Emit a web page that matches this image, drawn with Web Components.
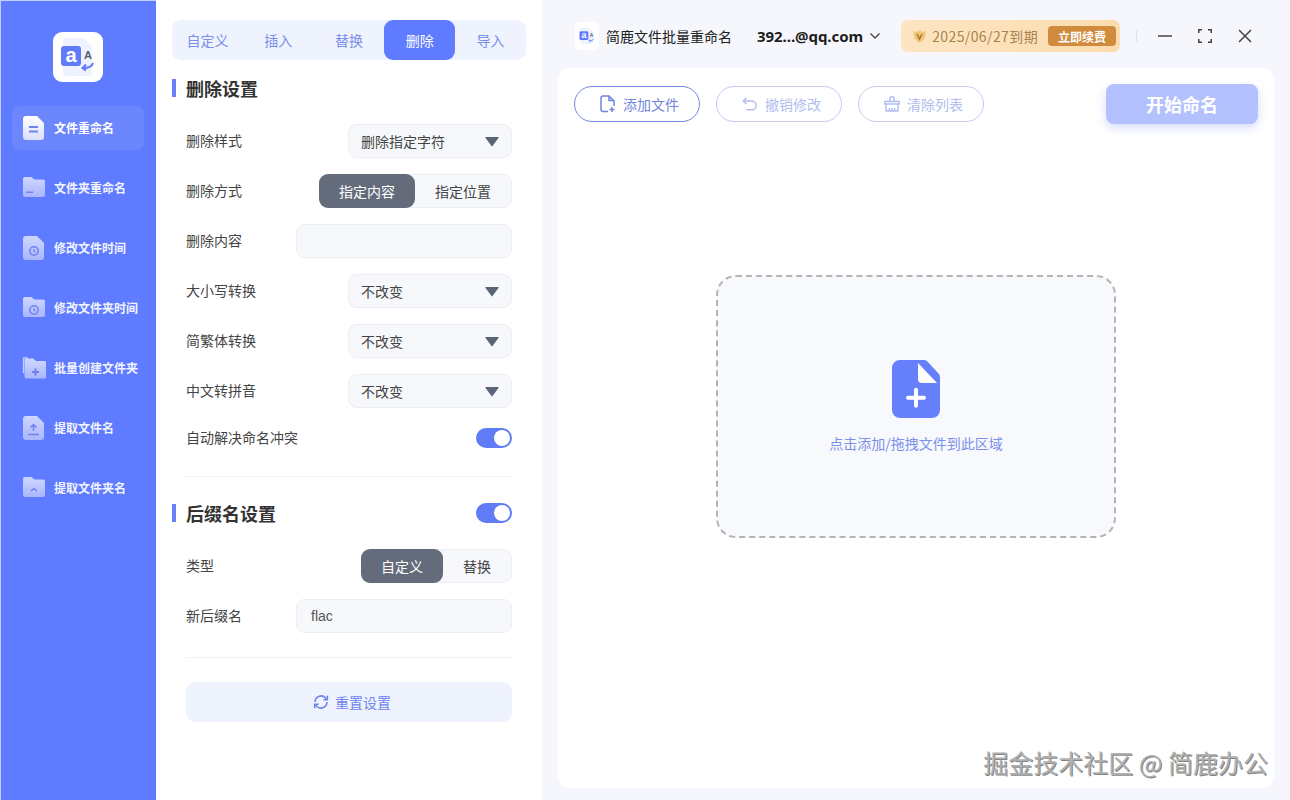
<!DOCTYPE html>
<html lang="zh"><head><meta charset="utf-8"><title>简鹿文件批量重命名</title>
<style>
html,body{margin:0;padding:0;height:100%}
body{width:1290px;height:800px;overflow:hidden;position:relative;display:flex;font-family:"Noto Sans CJK SC","Noto Sans",sans-serif;color:#333;font-size:14px}
</style></head><body>
<x-sidebar></x-sidebar>
<x-panel></x-panel>
<x-main></x-main>
<x-watermark>掘金技术社区 @ 简鹿办公</x-watermark>
<script>
const def=(name,css,html,extra)=>{customElements.define(name,class extends HTMLElement{
  connectedCallback(){ if(this.shadowRoot)return; const s=this.attachShadow({mode:'open'});
    s.innerHTML=`<style>${css}</style>`+(typeof html==='function'?html(this):html); if(extra)extra(this,s);} });};

const logoSvg=(w,h)=>`<svg width="${w}" height="${h}" viewBox="0 0 50 50"><path d="M14 6h16l9 9v25a4 4 0 0 1-4 4H14a4 4 0 0 1-4-4V10a4 4 0 0 1 4-4z" fill="#eef1fe"/><rect x="8" y="14" width="20" height="20" rx="3" fill="#5f7bfb"/><text x="18" y="30" text-anchor="middle" font-family="Liberation Sans,sans-serif" font-weight="700" font-size="20" fill="#fff">a</text><text x="35" y="27" text-anchor="middle" font-family="Liberation Sans,sans-serif" font-weight="700" font-size="11" fill="#555c70">A</text><path d="M40 31c-1 4-5 5-10 5m3-3.500-3.500 3.500 3.500 2.500" fill="none" stroke="#5f7bfb" stroke-width="2"/></svg>`;

const DOC="M3 0h11l7 7v14a3 3 0 0 1-3 3H3a3 3 0 0 1-3-3V3a3 3 0 0 1 3-3z";
const FOLD="M2 1h6.500l3 2.500H20a2 2 0 0 1 2 2V19a2 2 0 0 1-2 2H2a2 2 0 0 1-2-2V3a2 2 0 0 1 2-2z";
const clock=(x,y)=>`<circle cx="${x}" cy="${y}" r="4.200" fill="none" stroke="#6f82e8" stroke-width="1.500"/><path d="M${x} ${y-2}v2.200l1.600 1" fill="none" stroke="#6f82e8" stroke-width="1.200"/>`;
const ICONS={
 doc:{p:DOC,o:`<rect x="6" y="10" width="9" height="2" fill="#6f82ee"/><rect x="6" y="14.500" width="9" height="2" fill="#6f82ee"/>`,a:1},
 folder:{p:FOLD,o:`<rect x="3" y="15.500" width="7" height="1.500" fill="#6f82e8"/>`},
 doctime:{p:DOC,o:clock(11,15)},
 foldtime:{p:FOLD,o:clock(11,14)},
 foldadd:{p:FOLD,pre:`<path d="M5 3H0.500v15" transform="translate(0 -1)" fill="none" stroke="#c4cdfd" stroke-width="1.300"/>`,o:`<path d="M11 11v7M7.500 14.500h7" stroke="#6f82e8" stroke-width="2"/>`,shift:1},
 docup:{p:DOC,o:`<path d="M10.500 15V9M7.500 11.500l3-3 3 3M5 18.500h11" fill="none" stroke="#6f82e8" stroke-width="1.500"/>`},
 foldup:{p:FOLD,o:`<path d="M8 15l3-2.500 3 2.500" fill="none" stroke="#6f82e8" stroke-width="1.500"/>`},
};
let gid=0;
const navIcon=(k)=>{const i=ICONS[k],id='g'+(++gid);
 return `<svg width="24" height="24" viewBox="-1 0 24 24"><defs><linearGradient id="${id}" x1="0" y1="0" x2="0" y2="1"><stop offset="0" stop-color="${i.a?'#fff':'#cfd7ff'}"/><stop offset="1" stop-color="${i.a?'#d9dffe':'#a9b6fc'}"/></linearGradient></defs>${i.pre||''}<g ${i.shift?'transform="translate(1.500 1.500)"':''}><path d="${i.p}" fill="url(#${id})"/>${i.o}</g></svg>`;};

def('x-nav-item',`:host{display:flex;align-items:center;height:44px;padding-left:10px;gap:8px;border-radius:8px;color:#f2f4ff;font-size:12px;font-weight:700;white-space:nowrap}
:host([active]){background:#6c86fd;color:#fff}svg{flex:none}span{margin-top:-2px}`,
 h=>navIcon(h.getAttribute('icon'))+`<span><slot></slot></span>`);

def('x-sidebar',`:host{display:flex;flex-direction:column;align-items:stretch;width:156px;flex:none;height:800px;box-sizing:border-box;background:#5f7bff;padding:32px 12px 0;gap:16px;box-shadow:inset 1px 1px 0 #c3ceff}
.logo{width:50px;height:50px;border-radius:9px;background:#fff;align-self:center;margin-bottom:8px;display:block}.logo svg{display:block}`,
 `<div class="logo">${logoSvg(50,50)}</div>
 <x-nav-item icon="doc" active>文件重命名</x-nav-item>
 <x-nav-item icon="folder">文件夹重命名</x-nav-item>
 <x-nav-item icon="doctime">修改文件时间</x-nav-item>
 <x-nav-item icon="foldtime">修改文件夹时间</x-nav-item>
 <x-nav-item icon="foldadd">批量创建文件夹</x-nav-item>
 <x-nav-item icon="docup">提取文件名</x-nav-item>
 <x-nav-item icon="foldup">提取文件夹名</x-nav-item>`);

def('x-tabs',`:host{display:grid;grid-template-columns:repeat(5,1fr);height:40px;background:#eef3fe;border-radius:9px;width:354px;margin-left:-14px;color:#7b8eea;font-size:14px}
div{display:flex;align-items:center;justify-content:center;border-radius:9px}.on{background:#5f7bff;color:#fff}`,
 `<div>自定义</div><div>插入</div><div>替换</div><div class="on">删除</div><div>导入</div>`);

def('x-heading',`:host{display:flex;align-items:center;justify-content:space-between;position:relative;font-size:18px;font-weight:700;color:#333;height:18px;line-height:18px}
:host::before{content:"";position:absolute;left:-14px;top:0;bottom:0;width:4px;background:#6a80fb}`,`<slot></slot><slot name="end"></slot>`);

def('x-row',`:host{display:flex;align-items:center;justify-content:space-between;height:34px;color:#444;font-size:14px;white-space:nowrap}`,`<slot name="label"></slot><slot></slot>`);

const fieldCss=`box-sizing:border-box;height:34px;background:#f6f8fc;border:1px solid #eceef4;border-radius:9px;`;
def('x-select',`:host{display:flex;align-items:center;justify-content:space-between;${fieldCss}width:164px;padding:0 12px;font-size:14px;color:#444}
svg{display:block}`,`<slot></slot><svg width="14" height="11" viewBox="0 0 14 11"><path d="M1 1h12a.6.6 0 0 1 .5 1L7.500 10a.6.6 0 0 1-1 0L.500 2A.6.6 0 0 1 1 1z" fill="#5c6478"/></svg>`);

def('x-input',`:host{display:flex;align-items:center;${fieldCss}width:216px;padding:0 14px;font:14px "Liberation Sans",sans-serif;color:#555}`,`<slot></slot>`);

def('x-segment',`:host{display:flex;${fieldCss}font-size:14px;color:#444}
div{display:flex;align-items:center;justify-content:center;margin:-1px 0 -1px 0}.on{background:#646c7c;color:#fff;border-radius:9px;margin-left:-1px}`,
 h=>{const [a,b]=h.getAttribute('items').split(',');const [wa,wb]=h.getAttribute('widths').split(',');return `<div class="on" style="width:${wa}px">${a}</div><div style="width:${wb}px">${b}</div>`});

def('x-toggle',`:host{display:block;width:36px;height:20px;border-radius:10px;background:#5f7bf5;position:relative}
:host::after{content:"";position:absolute;right:2px;top:2px;width:16px;height:16px;border-radius:50%;background:#fff}`,``);

def('x-divider',`:host{display:block;height:1px;background:#f0f1f5}`,``);

def('x-reset',`:host{display:flex;align-items:center;justify-content:center;gap:6px;height:40px;box-sizing:border-box;padding-left:6px;background:#eef3fe;border-radius:9px;color:#6f84ee;font-size:14px}svg{display:block}`,
 `<svg width="16" height="16" viewBox="0 0 16 16" fill="none" stroke="#6f84ee" stroke-width="1.600"><path d="M2 8a6 6 0 0 1 10.300-4.200L14 5.500M14 8a6 6 0 0 1-10.300 4.200L2 10.500"/><path d="M14.300 1.800v3.900h-3.900M1.700 14.200v-3.900h3.900"/></svg><slot></slot>`);

def('x-panel',`:host{display:flex;flex-direction:column;width:386px;flex:none;box-sizing:border-box;background:#fff;height:800px;padding:20px 30px 0}
x-heading.a{margin-top:19px}x-row.f{margin-top:27px}x-row.n{margin-top:16px}
.tog{display:flex;align-items:center;justify-content:space-between;height:20px;margin-top:20px;color:#444}
.d1{margin-top:28px}.h2{margin-top:27px;height:18px}.d2{margin-top:24px}x-reset{margin-top:24px}
span{line-height:20px;padding-bottom:2px}`,
 `<x-tabs></x-tabs>
 <x-heading class="a">删除设置</x-heading>
 <x-row class="f"><span slot="label">删除样式</span><x-select>删除指定字符</x-select></x-row>
 <x-row class="n"><span slot="label">删除方式</span><x-segment items="指定内容,指定位置" widths="96,96"></x-segment></x-row>
 <x-row class="n"><span slot="label">删除内容</span><x-input></x-input></x-row>
 <x-row class="n"><span slot="label">大小写转换</span><x-select>不改变</x-select></x-row>
 <x-row class="n"><span slot="label">简繁体转换</span><x-select>不改变</x-select></x-row>
 <x-row class="n"><span slot="label">中文转拼音</span><x-select>不改变</x-select></x-row>
 <div class="tog"><span>自动解决命名冲突</span><x-toggle></x-toggle></div>
 <x-divider class="d1"></x-divider>
 <x-heading class="h2">后缀名设置<x-toggle slot="end"></x-toggle></x-heading>
 <x-row class="f"><span slot="label">类型</span><x-segment items="自定义,替换" widths="82,68"></x-segment></x-row>
 <x-row class="n"><span slot="label">新后缀名</span><x-input>flac</x-input></x-row>
 <x-divider class="d2"></x-divider>
 <x-reset>重置设置</x-reset>`);

def('x-titlebar',`:host{display:flex;align-items:center;height:68px;box-sizing:border-box;padding:4px 0 0 33px;color:#222;white-space:nowrap}
.ic{width:24px;height:28px;background:#fff;border-radius:4px;display:flex;align-items:center;justify-content:center;flex:none}
.t{margin-left:7px;font-size:14px}.m{margin-left:25px;font:700 15px "Noto Sans","Liberation Sans",sans-serif;letter-spacing:-.05px;color:#1d1d1d}
.ch{margin-left:6px;display:block}
.vip{margin-left:20px;width:219px;height:32px;box-sizing:border-box;border-radius:7px;background:linear-gradient(90deg,#fde5c3,#fcdcae);display:flex;align-items:center;padding:0 4px 0 11px;color:#a98350;font-size:14px;letter-spacing:.4px}
.vip svg{margin-right:5px;flex:none}
.r{margin-left:auto;width:68px;height:20px;background:#d08c3c;border-radius:4px;color:#fff;font-size:12px;font-weight:700;letter-spacing:0;display:flex;align-items:center;justify-content:center;flex:none}
.sep{width:1px;height:12px;background:#dfe2ea;margin:0 0 0 16px}
.b{display:block;margin-top:-1px}`,
 `<div class="ic">${logoSvg(22,22)}</div><div class="t">简鹿文件批量重命名</div><div class="m">392...@qq.com</div>
 <svg class="ch" width="12" height="8" viewBox="0 0 12 8"><path d="M1.500 1.500 6 6l4.500-4.500" fill="none" stroke="#444" stroke-width="1.300"/></svg>
 <div class="vip"><svg width="15" height="15" viewBox="0 0 15 15"><path d="M1 2l3 1 3.500-1.500L11 3l3-1-1.500 8-5 4-5-4z" fill="#f1c777"/><path d="M5 5l2.500 5L10 5" fill="none" stroke="#a4762c" stroke-width="1.500"/></svg>2025/06/27到期<div class="r">立即续费</div></div>
 <div class="sep"></div>
 <svg class="b" style="margin-left:21px" width="14" height="14" viewBox="0 0 14 14"><path d="M0 7h14" stroke="#444" stroke-width="1.500"/></svg>
 <svg class="b" style="margin-left:26px" width="14" height="14" viewBox="0 0 14 14" fill="none" stroke="#444" stroke-width="1.500"><path d="M.800 4V.800H4M10 .800h3.200V4M13.200 10v3.200H10M4 13.200H.800V10"/></svg>
 <svg class="b" style="margin-left:26px" width="14" height="14" viewBox="0 0 14 14"><path d="M1 1l12 12M13 1 1 13" stroke="#444" stroke-width="1.500"/></svg>`);

def('x-btn',`:host{display:flex;align-items:center;justify-content:center;gap:7px;width:126px;height:36px;box-sizing:border-box;padding-left:5px;border-radius:18px;border:1px solid #c3cbf2;color:#b2bdf0;font-size:14px;background:#fff}
:host([on]){border-color:#7186df;color:#6f84dd}svg{display:block}`,
 h=>`<slot name="i"></slot><slot></slot>`);

def('x-drop',`:host{display:flex;flex-direction:column;align-items:center;width:400px;height:263px;box-sizing:border-box;border:2px dashed #b4b4b4;border-radius:20px;background:#f7f9fd;color:#7b90ea;font-size:14px;padding-top:83px}
svg{display:block}.t{margin-top:15px;line-height:20px}`,
 `<svg width="48" height="58" viewBox="0 0 48 58"><path d="M8 0h24c1.500 0 2.500.6 3.500 1.600L46 13c1.400 1.400 2 2.500 2 4.500V50a8 8 0 0 1-8 8H8a8 8 0 0 1-8-8V8a8 8 0 0 1 8-8z" fill="#667ffb"/><path d="M26 3 45 23H30a4 4 0 0 1-4-4z" fill="#fff"/><path d="M24 29.700v16M16 37.700h16" stroke="#fff" stroke-width="4" stroke-linecap="round"/></svg><div class="t">点击添加/拖拽文件到此区域</div>`);

def('x-main',`:host{display:flex;flex-direction:column;flex:1;min-width:0;height:800px;background:#f5f7fc;box-sizing:border-box}
.card{margin:0 16px 12px;flex:1;background:#fff;border-radius:12px;display:flex;flex-direction:column;padding:16px 16px 0}
.bar{display:flex;align-items:center;gap:16px;height:40px}
.go{margin-left:auto;width:152px;height:40px;border-radius:8px;background:#b3c2fe;color:#fff;font-size:18px;font-weight:700;display:flex;align-items:center;justify-content:center;box-shadow:0 4px 10px rgba(120,140,240,.3)}
x-drop{align-self:center;margin-top:151px}`,
 `<x-titlebar></x-titlebar><div class="card"><div class="bar">
 <x-btn on><svg slot="i" width="16" height="18" viewBox="0 0 16 18" fill="none" stroke="#6f84dd" stroke-width="1.500"><path d="M8 16.500H3a2 2 0 0 1-2-2V3a2 2 0 0 1 2-2h6l5 5v5"/><path d="M9 1v4.500h5M12 12v5M9.500 14.500h5"/></svg>添加文件</x-btn>
 <x-btn><svg slot="i" width="16" height="16" viewBox="0 0 18 16" fill="none" stroke="#b2bdf0" stroke-width="1.700"><path d="M5 1 1.500 4.500 5 8"/><path d="M2 4.500h9a5 5 0 0 1 0 10H5"/></svg>撤销修改</x-btn>
 <x-btn><svg slot="i" width="16" height="16" viewBox="0 0 16 16" fill="none" stroke="#b2bdf0" stroke-width="1.500"><path d="M6 5V2.500a2 2 0 0 1 4 0V5M1 5.500h14V8H1zM2 8v7h12V8M5.500 15v-3M8 15v-3M10.500 15v-3"/></svg>清除列表</x-btn>
 <div class="go">开始命名</div></div><x-drop></x-drop></div>`);

def('x-watermark',`:host{position:absolute;right:22px;top:745px;font-size:25px;line-height:34px;color:#b0b0b0;white-space:nowrap;text-shadow:1px 1px 0 rgba(90,90,90,.75)}`,`<slot></slot>`);
</script></body></html>
